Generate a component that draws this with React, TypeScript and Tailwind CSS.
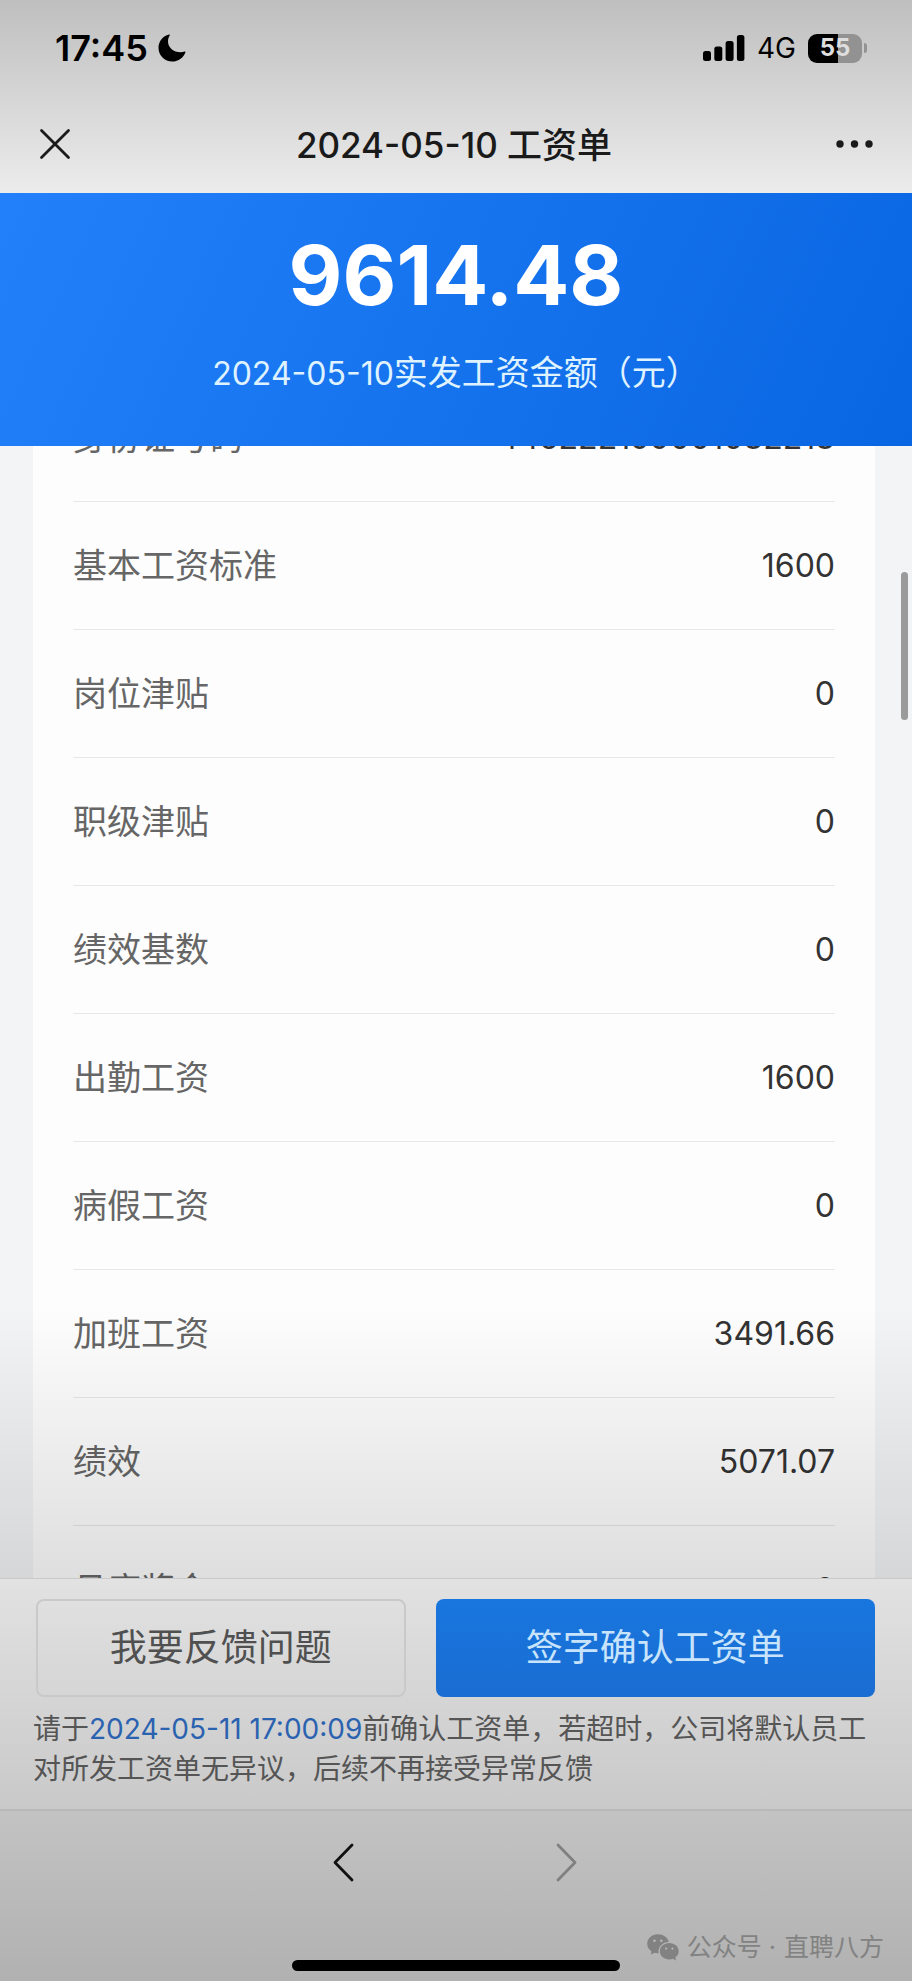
import React, { useLayoutEffect, useRef } from "react";

const rows = [
  { label: "身份证号码", value: "445222199001032213" },
  { label: "基本工资标准", value: "1600" },
  { label: "岗位津贴", value: "0" },
  { label: "职级津贴", value: "0" },
  { label: "绩效基数", value: "0" },
  { label: "出勤工资", value: "1600" },
  { label: "病假工资", value: "0" },
  { label: "加班工资", value: "3491.66" },
  { label: "绩效", value: "5071.07" },
  { label: "月度奖金", value: "0" },
];

function StatusBar() {
  return (
    <div className="flex h-24 items-center justify-between pr-[45px] pl-[55px] text-black">
      <div className="flex items-center gap-[10px]">
        <span className="text-[36px] leading-10 font-semibold">17:45</span>
        <svg className="h-7 w-7" viewBox="0 0 28 28" fill="currentColor" aria-hidden="true">
          <path d="M11 0.6C5 2 0.5 7.400 0.5 13.800C0.5 21.500 6.700 27.600 14.300 27.600C20.500 27.600 25.800 23.500 27.500 18C27.600 17.600 27.200 17.300 26.800 17.500C25.500 18 24 18.300 22.500 18.300C15.500 18.300 10 13.500 10 7.500C10 5.200 10.600 3.200 11.700 1.500C12 1 11.600 0.5 11 0.6Z" />
        </svg>
      </div>
      <div className="flex items-center gap-3">
        <svg className="h-7 w-[42px]" viewBox="0 0 42 28" fill="currentColor" aria-hidden="true">
          <rect x="0" y="17" width="8" height="10" rx="2.500" />
          <rect x="11.300" y="12.500" width="8" height="14.500" rx="2.500" />
          <rect x="22.600" y="7" width="8" height="20" rx="2.500" />
          <rect x="33.900" y="1" width="7.500" height="26" rx="2.500" />
        </svg>
        <span className="text-[28px] leading-10">4G</span>
        <div className="flex items-center gap-[2px]">
          <div className="flex h-[29px] w-[54px] items-center justify-center rounded-[9px] bg-linear-to-r from-black from-55% to-[#929292] to-55% text-[24px] leading-7 font-bold text-[#dedede]">
            55
          </div>
          <div className="h-[10px] w-[3px] rounded-r-full bg-[#929292]" />
        </div>
      </div>
    </div>
  );
}

function NavBar() {
  return (
    <div className="flex h-[97px] items-center justify-between px-[38px] text-[#1a1a1a]">
      <button type="button" aria-label="关闭">
        <svg className="h-[34px] w-[34px]" viewBox="0 0 34 34" fill="none" stroke="currentColor" strokeWidth="2.800" strokeLinecap="round">
          <path d="M3.500 2.500L30.500 29.500M30.500 2.500L3.500 29.500" />
        </svg>
      </button>
      <h1 className="text-[35px] leading-[48px] font-medium">2024-05-10 工资单</h1>
      <button type="button" aria-label="更多">
        <svg className="h-[34px] w-[38px]" viewBox="0 0 38 34" fill="currentColor">
          <circle cx="4" cy="16" r="3.700" />
          <circle cx="18.500" cy="16" r="3.700" />
          <circle cx="33" cy="16" r="3.700" />
        </svg>
      </button>
    </div>
  );
}

function PayList() {
  const listRef = useRef<HTMLDivElement>(null);

  // open with the ID number row scrolled half under the summary
  useLayoutEffect(() => {
    if (listRef.current) listRef.current.scrollTop = 72;
  }, []);

  return (
    <main className="relative min-h-0 flex-1">
      <div ref={listRef} className="h-full overflow-y-auto bg-[#f2f4f6] pr-[37px] pl-[33px] [scrollbar-width:none]">
        <dl className="bg-[#fdfdfd] px-10">
          {rows.map((row) => (
            <div key={row.label} className="flex h-32 items-center justify-between border-b border-[#e8e8e8]">
              <dt className="text-[34px] leading-[48px] text-[#666]">{row.label}</dt>
              <dd className="text-[32px] leading-[48px] text-[#333]">{row.value}</dd>
            </div>
          ))}
        </dl>
      </div>
      <div className="pointer-events-none absolute inset-x-0 bottom-0 h-[270px] bg-linear-to-b from-transparent to-black/12" />
      <div className="pointer-events-none absolute top-[126px] right-1 h-[148px] w-[7px] rounded-full bg-[#9b9b9b]" />
    </main>
  );
}

function ActionBar() {
  return (
    <section className="border-t border-[#cacaca] bg-linear-to-b from-[#e2e2e2] to-[#c9c9c9] pt-5 pr-[37px] pb-5 pl-[33px]">
      <div className="flex gap-[30px] pl-[3px] text-[37px] leading-[48px]">
        <button type="button" className="h-[98px] flex-[368] rounded-lg border-2 border-[#c9c9c9] text-[#505050]">
          我要反馈问题
        </button>
        <button type="button" className="h-[98px] flex-[442] rounded-lg bg-linear-to-b from-[#1876de] to-[#1a6dd2] text-[#c8e4fc]">
          签字确认工资单
        </button>
      </div>
      <p className="mt-3 text-[28px] leading-10 text-[#555]">
        请于<time className="text-[#2b62b0]">2024-05-11 17:00:09</time>前确认工资单，若超时，公司将默认员工对所发工资单无异议，后续不再接受异常反馈
      </p>
    </section>
  );
}

function WechatIcon() {
  return (
    <svg className="h-[27px] w-8" viewBox="0 0 32 27" fill="#828282" aria-hidden="true">
      <path d="M11 0.3C4.900 0.3 0.2 4.500 0.2 9.800C0.2 13 1.800 15.600 4.400 17.300L4 20.400L7.600 18.800C8.800 19.200 10.200 19.300 11.600 19.200C10.700 12.700 15.800 8 21.800 8C20.700 3.400 16.300 0.3 11 0.3Z" />
      <path d="M22.300 9C17 9 12.900 12.600 12.900 17.200C12.900 21.900 17 25.400 22.300 25.400C23.600 25.400 24.800 25.200 25.900 24.800L28.800 26.400L28.500 23.300C30.500 21.800 31.700 19.700 31.700 17.200C31.700 12.600 27.600 9 22.300 9Z" />
      <g fill="#b8b8b8">
        <circle cx="7.500" cy="6.800" r="1.300" />
        <circle cx="14.300" cy="6.800" r="1.300" />
        <circle cx="19.200" cy="14.600" r="1.100" />
        <circle cx="25.400" cy="14.600" r="1.100" />
      </g>
    </svg>
  );
}

function BottomBar() {
  return (
    <footer className="relative flex h-[172px] flex-col items-center justify-between border-t-2 border-[#b9b9b9] bg-linear-to-b from-[#c3c3c3] to-[#b1b1b1] pt-8 pb-[10px]">
      <nav className="flex gap-[200px]">
        <button type="button" aria-label="后退" className="text-[#111]">
          <svg className="h-10 w-6" viewBox="0 0 24 40" fill="none" stroke="currentColor" strokeWidth="2.800" strokeLinecap="round" strokeLinejoin="round">
            <path d="M20 2L3 19.500L20 37" />
          </svg>
        </button>
        <button type="button" aria-label="前进" className="text-[#808080]">
          <svg className="h-10 w-6" viewBox="0 0 24 40" fill="none" stroke="currentColor" strokeWidth="2.800" strokeLinecap="round" strokeLinejoin="round">
            <path d="M2 2L19 19.500L2 37" />
          </svg>
        </button>
      </nav>
      <div className="h-[11px] w-[328px] rounded-full bg-black" />
      {/* account watermark */}
      <div className="absolute right-7 bottom-4 flex items-center gap-2 text-[25px] leading-9 text-[#828282]">
        <WechatIcon />
        <span>公众号 ·</span>
        <span>直聘八方</span>
      </div>
    </footer>
  );
}

export default function App() {
  return (
    <div className="flex h-screen flex-col font-['Inter','Noto_Sans_CJK_SC',sans-serif]">
      <header className="bg-linear-to-b from-[#bfbfbf] to-[#ececec]">
        <StatusBar />
        <NavBar />
      </header>
      <section className="flex h-[253px] flex-col items-center bg-linear-115 from-[#2380fb] via-[#1673ee] to-[#0966e2] pt-8 text-white">
        <p className="text-[83px] leading-[100px] font-bold">9614.48</p>
        <p className="mt-6 text-[34px] leading-[48px] text-[#dff2ff]">
          <span className="text-[32px]">2024-05-10</span>实发工资金额（元）
        </p>
      </section>
      <PayList />
      <ActionBar />
      <BottomBar />
    </div>
  );
}
